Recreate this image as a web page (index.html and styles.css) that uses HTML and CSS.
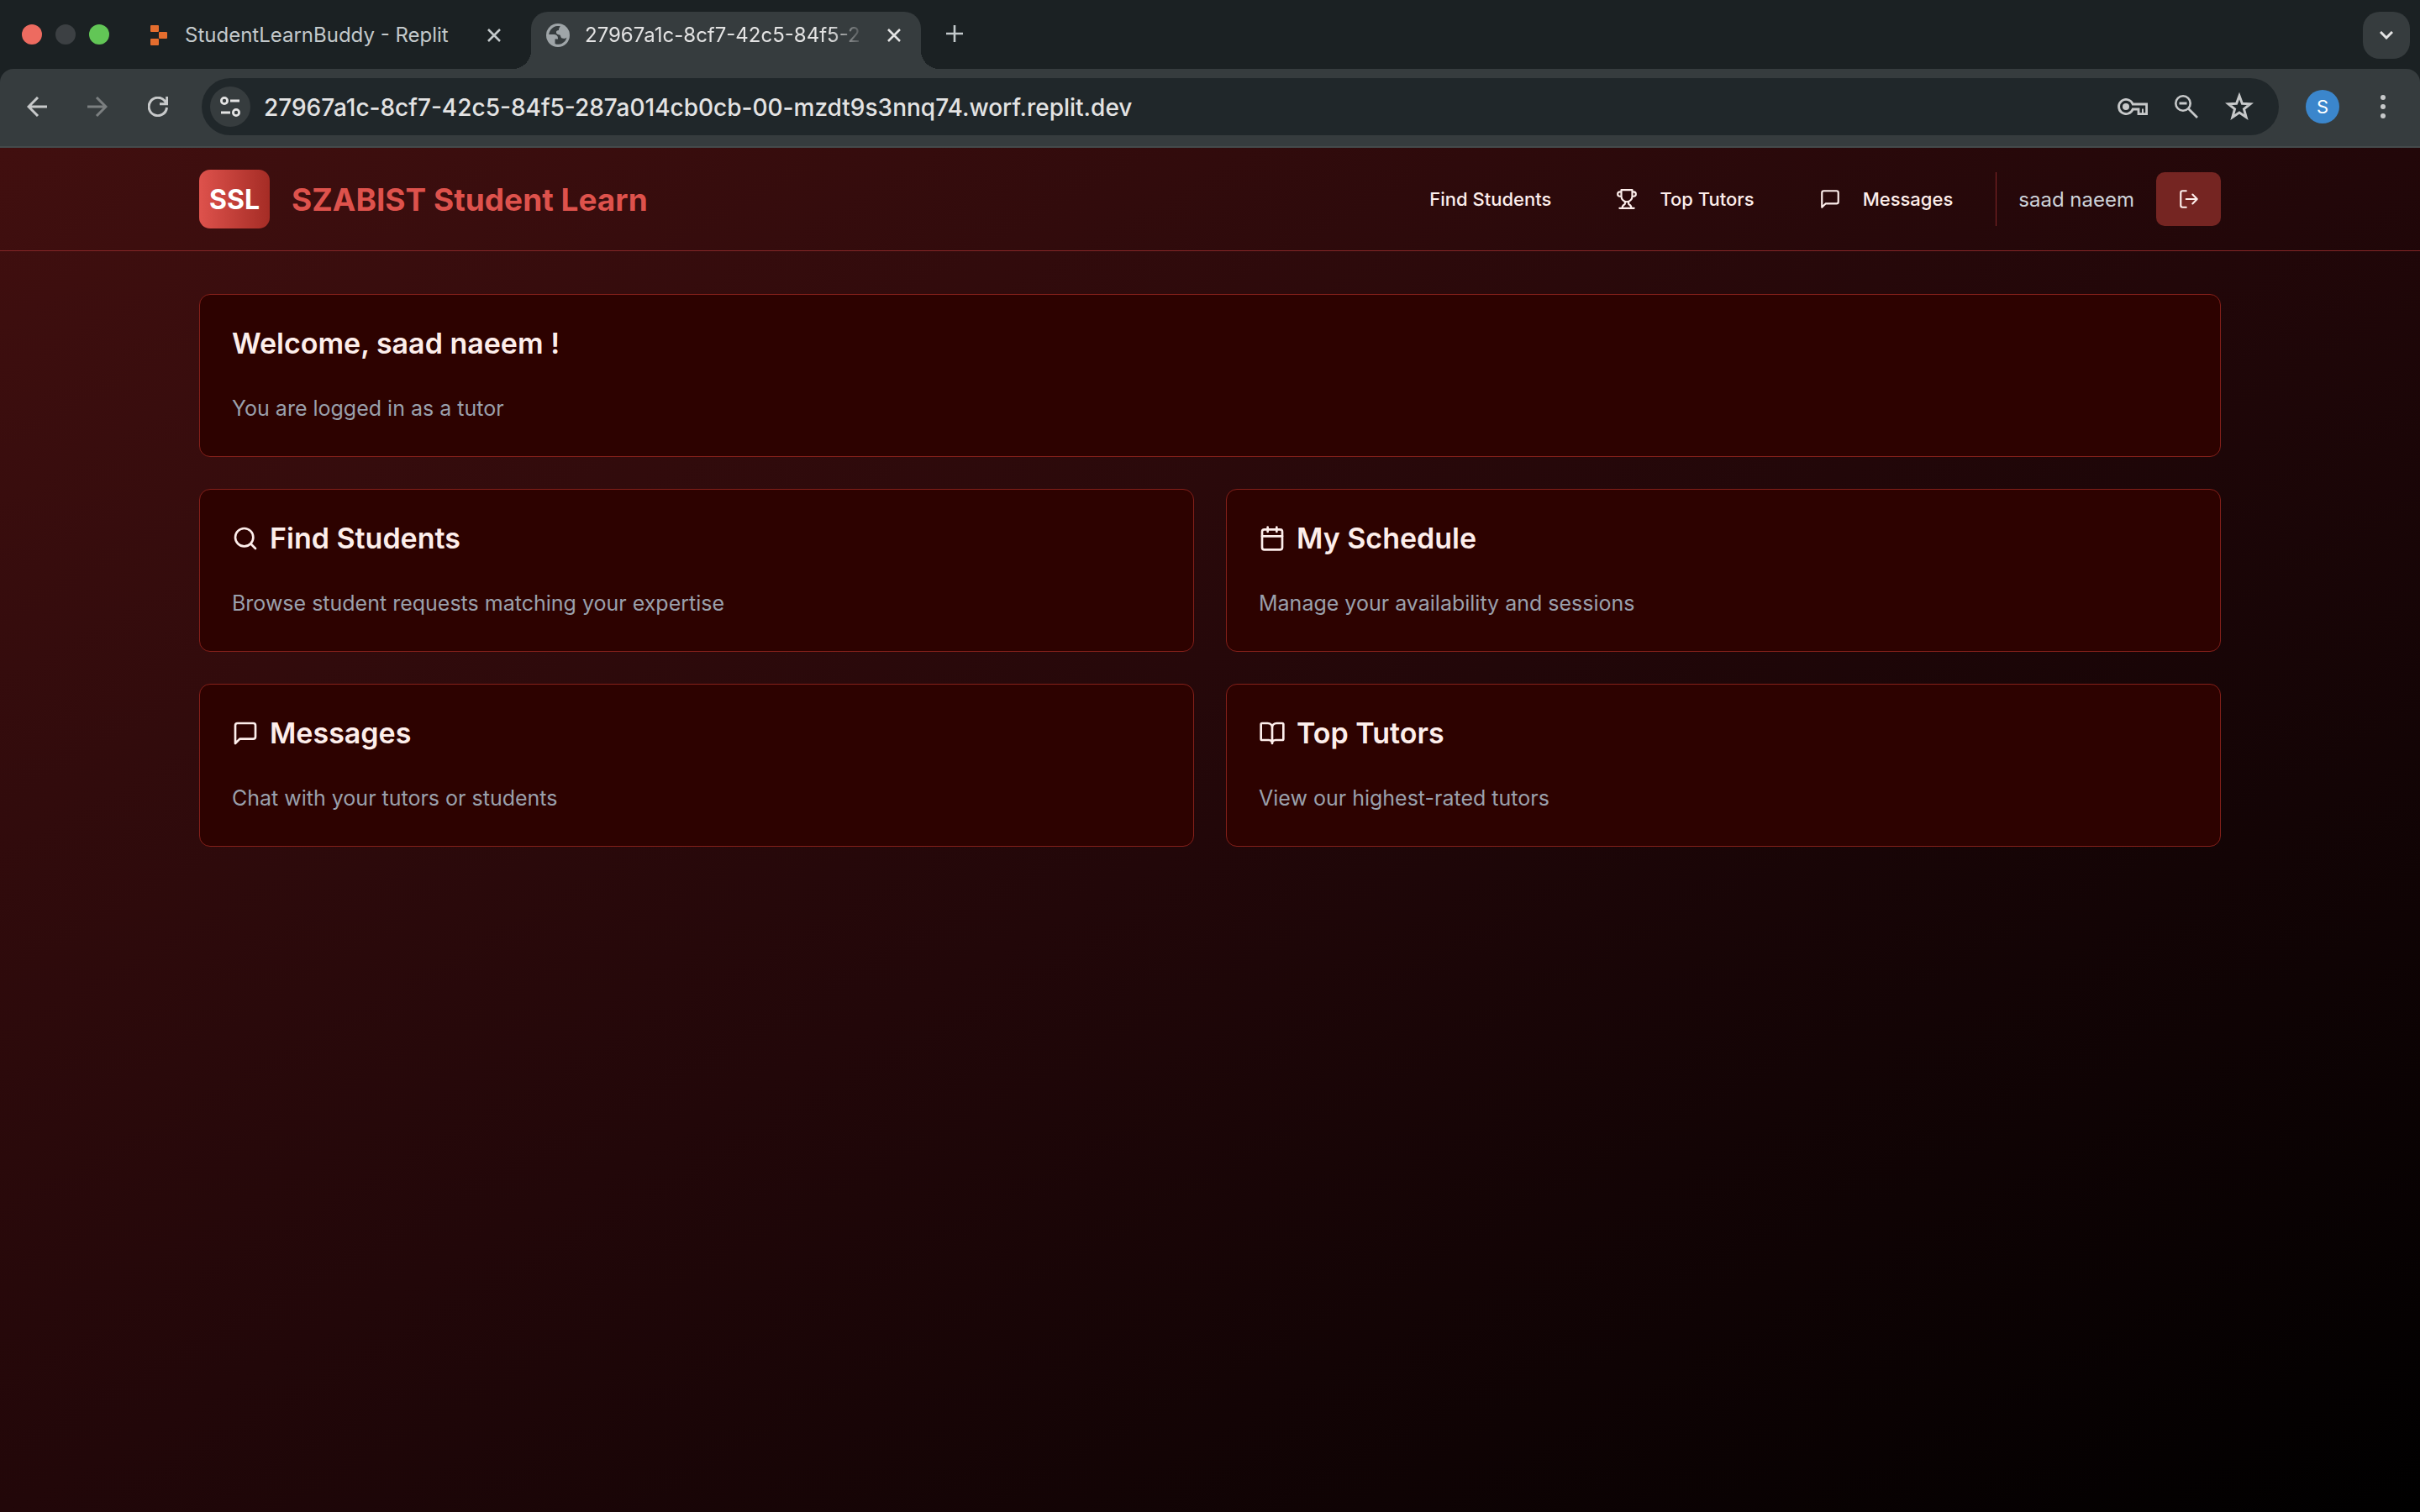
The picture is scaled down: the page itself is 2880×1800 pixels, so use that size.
FILE: index.html
```html
<!DOCTYPE html>
<html lang="en">
<head>
<meta charset="utf-8">
<title>SZABIST Student Learn</title>
<link rel="stylesheet" href="styles.css">
</head>
<body>
<svg class="sprite" aria-hidden="true">
  <symbol id="close" viewBox="0 0 16 16"><path d="M1 1l14 14M15 1L1 15" fill="none" stroke="currentColor" stroke-width="2.6"/></symbol>
  <symbol id="message" viewBox="0 0 24 24"><path d="M21 15a2 2 0 0 1-2 2H7l-4 4V5a2 2 0 0 1 2-2h14a2 2 0 0 1 2 2z"/></symbol>
</svg>

<div class="window">
  <div class="tabstrip">
    <div class="lights"><span class="light light-close"></span><span class="light light-min"></span><span class="light light-max"></span></div>
    <div class="tab">
      <svg class="tab-icon" viewBox="0 0 28 28" fill="#e46d2e"><rect x="3" y="2" width="10" height="8" rx="1"/><rect x="13" y="10" width="10" height="8" rx="1"/><rect x="3" y="18" width="10" height="8" rx="1"/></svg>
      <span class="tab-title">StudentLearnBuddy - Replit</span>
      <button class="tab-close" aria-label="Close tab"><svg width="16" height="16"><use href="#close"/></svg></button>
    </div>
    <div class="tab tab-active">
      <svg class="tab-icon" viewBox="0 0 28 28"><circle cx="14" cy="14" r="14" fill="#9fa5a8"/><path d="M13 3C8 3.500 4 7.500 3.200 13H9c3 0 5 1.500 5 4.500v1h-3.500V24c1.500.700 3 1 4.500.800 5-.500 8.500-4 9.500-8.300-1.500 1.500-3 1.800-5.500 1-2-.700-1.500-3.500-3-4-2-.500-3.500-.500-4-2.500-.400-2 1-3 3-3 0-2 .500-3.500 2-4.500-1.300-.500-2.600-.600-4-.500z" fill="#363c3e"/></svg>
      <span class="tab-title">27967a1c-8cf7-42c5-84f5-2</span>
      <button class="tab-close" aria-label="Close tab"><svg width="16" height="16"><use href="#close"/></svg></button>
    </div>
    <button class="new-tab" aria-label="New tab"><svg width="20" height="20" viewBox="0 0 20 20"><path d="M10 0v20M0 10h20" fill="none" stroke="currentColor" stroke-width="2.600"/></svg></button>
    <button class="tab-search" aria-label="Search tabs"><svg width="16" height="10" viewBox="0 0 16 10"><path d="M1 1l7 7 7-7" fill="none" stroke="currentColor" stroke-width="3"/></svg></button>
  </div>

  <div class="toolbar">
    <button class="tool" aria-label="Back"><svg width="24" height="24" viewBox="0 0 24 24"><path d="M24 12H2M13 1L2 12l11 11"/></svg></button>
    <button class="tool tool-off" aria-label="Forward"><svg width="24" height="24" viewBox="0 0 24 24"><path d="M0 12h22M11 1l11 11-11 11"/></svg></button>
    <button class="tool" aria-label="Reload"><svg width="24" height="24" viewBox="0 0 24 24"><path d="M22.500 13A10.700 10.700 0 1 1 20 5l2 2.500M22.700 0v8.700H14"/></svg></button>
    <div class="omnibox">
      <button class="site-info" aria-label="View site information"><svg width="26" height="24" viewBox="0 0 26 24" fill="none" stroke="currentColor" stroke-width="2.800"><circle cx="6" cy="5" r="3.600"/><path d="M13 5h11M2 19h11"/><circle cx="20" cy="19" r="3.600"/></svg></button>
      <input class="url" type="text" aria-label="Address" value="27967a1c-8cf7-42c5-84f5-287a014cb0cb-00-mzdt9s3nnq74.worf.replit.dev">
      <div class="omni-actions">
        <button aria-label="Passwords"><svg width="36" height="20" viewBox="0 0 36 20"><path d="M18.200 7A8.600 8.600 0 1 0 18.200 13H25v5.600h9.600V7z" fill="none" stroke="currentColor" stroke-width="2.800"/><circle cx="10" cy="10" r="4" fill="currentColor"/><path d="M30 12.500V18" stroke="currentColor" stroke-width="2"/></svg></button>
        <button aria-label="Zoom"><svg width="28" height="28" viewBox="0 0 28 28" fill="none" stroke="currentColor"><circle cx="10" cy="10" r="8.700" stroke-width="2.600"/><path d="M5.500 10h9M16.500 16.500L27 27" stroke-width="2.800"/></svg></button>
        <button aria-label="Bookmark"><svg width="34" height="34" viewBox="0 0 30 30"><path d="M15 3.500l3 8.200 8.500.400-6.700 5.300 2.400 8.700L15 21.300 7.800 26.100l2.400-8.700L3.500 12.100l8.500-.400z" fill="none" stroke="currentColor" stroke-width="2.600"/></svg></button>
      </div>
    </div>
    <button class="avatar" aria-label="Profile">S</button>
    <button class="menu" aria-label="Menu"><svg width="6" height="28" viewBox="0 0 6 28" fill="currentColor"><circle cx="3" cy="3" r="3"/><circle cx="3" cy="14" r="3"/><circle cx="3" cy="25" r="3"/></svg></button>
  </div>

  <div class="page">
    <header class="header">
      <div class="container header-row">
        <a class="brand" href="#"><span class="logo">SSL</span><span class="brand-name">SZABIST Student Learn</span></a>
        <nav class="nav">
          <a class="nav-link" href="#">Find Students</a>
          <a class="nav-link" href="#"><svg class="icon-sm" viewBox="0 0 24 24"><path d="M6 9H4.500a2.500 2.500 0 0 1 0-5H6M18 9h1.500a2.500 2.500 0 0 0 0-5H18M4 22h16M10 14.660V17c0 .550-.470.980-.970 1.210C7.850 18.750 7 20.240 7 22M14 14.660V17c0 .550.470.980.970 1.210C16.150 18.750 17 20.240 17 22M18 2H6v7a6 6 0 0 0 12 0V2Z"/></svg>Top Tutors</a>
          <a class="nav-link" href="#"><svg class="icon-sm"><use href="#message"/></svg>Messages</a>
          <div class="user">
            <span>saad naeem</span>
            <button class="logout" aria-label="Log out"><svg class="icon-sm" viewBox="0 0 24 24"><path d="M9 21H5a2 2 0 0 1-2-2V5a2 2 0 0 1 2-2h4M16 17l5-5-5-5M21 12H9"/></svg></button>
          </div>
        </nav>
      </div>
    </header>
    <main class="container cards">
      <section class="card card-wide"><h1>Welcome, saad naeem !</h1><p>You are logged in as a tutor</p></section>
      <a class="card" href="#"><h2><svg class="icon-md" viewBox="0 0 24 24"><circle cx="11" cy="11" r="8"/><path d="m21 21-4.300-4.300"/></svg>Find Students</h2><p>Browse student requests matching your expertise</p></a>
      <a class="card" href="#"><h2><svg class="icon-md" viewBox="0 0 24 24"><path d="M8 2v4M16 2v4M3 10h18"/><rect x="3" y="4" width="18" height="18" rx="2"/></svg>My Schedule</h2><p>Manage your availability and sessions</p></a>
      <a class="card" href="#"><h2><svg class="icon-md"><use href="#message"/></svg>Messages</h2><p>Chat with your tutors or students</p></a>
      <a class="card" href="#"><h2><svg class="icon-md" viewBox="0 0 24 24"><path d="M12 7v14M3 18a1 1 0 0 1-1-1V4a1 1 0 0 1 1-1h5a4 4 0 0 1 4 4 4 4 0 0 1 4-4h5a1 1 0 0 1 1 1v13a1 1 0 0 1-1 1h-6a3 3 0 0 0-3 3 3 3 0 0 0-3-3z"/></svg>Top Tutors</h2><p>View our highest-rated tutors</p></a>
    </main>
  </div>
</div>
</body>
</html>
```
FILE: styles.css
```css
* { box-sizing: border-box; }
body { margin: 0; font-family: Inter, "Liberation Sans", sans-serif; background: #1b2123; }
button { padding: 0; border: 0; background: none; color: inherit; font: inherit; display: flex; align-items: center; justify-content: center; }
a { color: inherit; text-decoration: none; }
svg { display: block; flex: none; }
.sprite { display: none; }
.window { min-height: 100vh; display: flex; flex-direction: column; }

/* Tab strip */
.tabstrip { display: flex; align-items: flex-end; height: 82px; padding: 0 12px 0 26px; color: #c3c9cb; font-size: 24px; }
.lights { display: flex; gap: 16px; align-self: center; width: 136px; }
.light { width: 24px; height: 24px; border-radius: 50%; }
.light-close { background: #ed6b60; }
.light-min { background: #3c4043; }
.light-max { background: #62c656; }
.tab { display: flex; align-items: center; gap: 16px; width: 464px; height: 68px; padding: 0 30px 12px 14px; }
.tab + .tab { margin-left: 6px; }
.tab-icon { width: 28px; height: 28px; }
.tab-title { flex: 1; min-width: 0; overflow: hidden; white-space: nowrap; line-height: 32px; }
.tab-close { width: 16px; height: 16px; }
.tab-active { position: relative; padding-left: 18px; padding-right: 24px; border-radius: 20px 20px 0 0; background: #363c3e; color: #e3e3e3; gap: 18px; }
.tab-active .tab-title { -webkit-mask-image: linear-gradient(to right, #000 85%, transparent 98%); mask-image: linear-gradient(to right, #000 85%, transparent 98%); }
.tab-active::before, .tab-active::after { content: ""; position: absolute; bottom: 0; width: 22px; height: 22px; }
.tab-active::before { right: 100%; background: radial-gradient(circle at 0 0, transparent 22px, #363c3e 22px); }
.tab-active::after { left: 100%; background: radial-gradient(circle at 100% 0, transparent 22px, #363c3e 22px); }
.new-tab { width: 20px; height: 20px; margin: 0 0 32px 30px; }
.tab-search { width: 56px; height: 56px; margin: 0 0 12px auto; border-radius: 20px; background: #363c3e; color: #e3e3e3; }

/* Toolbar */
.toolbar { display: flex; align-items: center; height: 94px; padding: 0 41px 2px 32px; border-bottom: 2px solid #444a4b; border-radius: 16px 16px 0 0; background: #363c3e; color: #c7c9ca; }
.tool { width: 24px; height: 24px; margin-right: 48px; }
.tool svg { fill: none; stroke: currentColor; stroke-width: 3; }
.tool-off { color: #7b7f80; }
.tool:nth-child(3) { margin-right: 40px; }
.omnibox { flex: 1; display: flex; align-items: center; height: 68px; padding: 0 30px 0 10px; border-radius: 34px; background: #20272a; }
.site-info { width: 48px; height: 48px; border-radius: 50%; background: #363c3e; color: #e3e3e3; }
.url { flex: 1; min-width: 0; margin-left: 16px; padding: 2px 0 0; border: 0; outline: 0; background: none; color: #e3e3e3; font: 500 28px/40px Inter, "Liberation Sans", sans-serif; }
.omni-actions { display: flex; align-items: center; gap: 32px; }
.avatar { width: 40px; height: 40px; margin-left: 32px; border-radius: 50%; background: #3b86cc; color: #fff; font-size: 22px; }
.menu { margin-left: 49px; }

/* Page */
.page { flex: 1; background: linear-gradient(to bottom right, #410f0f, #220709 50%, #000); color: #fdeeeb; }
.container { max-width: 2458px; margin: 0 auto; padding: 0 26px; }
.header { border-bottom: 1px solid #842627; }
.header-row { display: flex; align-items: center; justify-content: space-between; height: 122px; }
.brand { display: flex; align-items: center; gap: 26px; color: #de524c; font-size: 37px; font-weight: 700; }
.logo { display: flex; align-items: center; justify-content: center; width: 84px; height: 70px; border-radius: 13px; background: linear-gradient(to right, #de524c, #a52c25); color: #fff; font-size: 32px; }
.nav { display: flex; align-items: center; gap: 25px; font-size: 22px; font-weight: 500; }
.nav-link { display: flex; align-items: center; gap: 26px; height: 64px; padding: 0 26px; }
.icon-sm, .icon-md { fill: none; stroke: currentColor; stroke-width: 2; stroke-linecap: round; stroke-linejoin: round; }
.icon-sm { width: 26px; height: 26px; }
.icon-md { width: 32px; height: 32px; }
.user { display: flex; align-items: center; gap: 26px; height: 64px; padding-left: 26px; border-left: 1px solid #842627; color: #ced3d9; font-size: 24px; font-weight: 400; }
.logout { width: 77px; height: 64px; border-radius: 10px; background: #752522; color: #fdeeeb; }
.cards { display: grid; grid-template-columns: 1fr 1fr; gap: 38px; padding-top: 51px; padding-bottom: 51px; }
.card { display: flex; flex-direction: column; gap: 38px; padding: 38px; border: 1px solid #84201a; border-radius: 13px; background: #2d0200; }
.card-wide { grid-column: 1 / -1; }
.card h1, .card h2 { display: flex; align-items: center; gap: 13px; margin: 0; font-size: 34px; line-height: 40px; font-weight: 600; }
.card p { margin: 0; color: #9aa0ac; font-size: 25px; line-height: 38px; }
```
